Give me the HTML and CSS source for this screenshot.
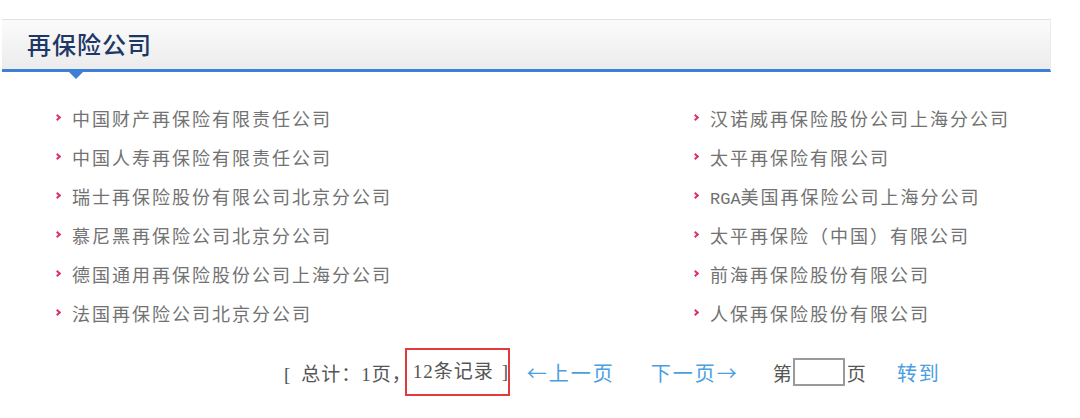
FILE: index.html
```html
<!DOCTYPE html>
<html lang="zh">
<head>
<meta charset="utf-8">
<title>再保险公司</title>
<link rel="stylesheet" href="styles.css">
</head>
<body>
<div class="panel">
  <div class="head">
    <h2 class="title">再保险公司</h2>
    <span class="pointer"></span>
  </div>
  <ul class="list">
    <li><a class="item">中国财产再保险有限责任公司</a></li>
    <li><a class="item">汉诺威再保险股份公司上海分公司</a></li>
    <li><a class="item">中国人寿再保险有限责任公司</a></li>
    <li><a class="item">太平再保险有限公司</a></li>
    <li><a class="item">瑞士再保险股份有限公司北京分公司</a></li>
    <li><a class="item"><span class="latin">RGA</span>美国再保险公司上海分公司</a></li>
    <li><a class="item">慕尼黑再保险公司北京分公司</a></li>
    <li><a class="item">太平再保险（中国）有限公司</a></li>
    <li><a class="item">德国通用再保险股份公司上海分公司</a></li>
    <li><a class="item">前海再保险股份有限公司</a></li>
    <li><a class="item">法国再保险公司北京分公司</a></li>
    <li><a class="item">人保再保险股份有限公司</a></li>
  </ul>
  <div class="pager">
    <span class="info"><span class="bracket">[</span>总计：1页，</span><span class="mark">12条记录<span class="close">]</span></span>
    <a class="link prev"><span class="arrow">←</span>上一页</a>
    <a class="link next">下一页<span class="arrow">→</span></a>
    <span class="goto"><span>第</span><span class="box"></span><span>页</span></span>
    <a class="link go">转到</a>
  </div>
</div>
</body>
</html>
```

FILE: styles.css
```css
html, body {
  margin: 0;
  padding: 0;
  background: #ffffff;
}
body {
  font-family: "Noto Sans CJK SC", sans-serif;
}
.panel {
  width: 1049px;
  margin: 19px 0 0 2px;
}
.head {
  position: relative;
  height: 49px;
  border-top: 1px solid #e2e2e2;
  border-right: 1px solid #ececec;
  border-bottom: 3px solid #3d7fd6;
  background: linear-gradient(#fbfbfb, #ececec);
  display: flex;
  align-items: center;
  padding-left: 25px;
}
.title {
  margin: 0;
  font-size: 24px;
  font-weight: 500;
  color: #1d3866;
  letter-spacing: 1px;
  margin-top: -3px;
}
.pointer {
  position: absolute;
  left: 67px;
  bottom: -10px;
  width: 0;
  height: 0;
  border-left: 7px solid transparent;
  border-right: 7px solid transparent;
  border-top: 7px solid #3d7fd6;
}
.list {
  list-style: none;
  margin: 0;
  padding: 26px 0 0 53px;
  display: grid;
  grid-template-columns: 638px 1fr;
}
.list li {
  height: 39px;
  display: flex;
  align-items: center;
}
.item {
  position: relative;
  padding-left: 17px;
  font-size: 18px;
  letter-spacing: 2px;
  color: #727272;
}
.item::before {
  content: "";
  position: absolute;
  left: 0;
  top: 50%;
  width: 3px;
  height: 3px;
  margin-top: -3px;
  border-top: 2px solid #e0306a;
  border-right: 2px solid #e0306a;
  transform: rotate(45deg);
}
.latin {
  font-family: "Liberation Mono", monospace;
  font-size: 17px;
  letter-spacing: 0;
}
.pager {
  display: flex;
  align-items: center;
  margin-top: 16px;
  padding-left: 282px;
  color: #555;
}
.info, .mark {
  font-family: "Liberation Serif", "Noto Sans CJK SC", serif;
  font-size: 19px;
  letter-spacing: 1px;
}
.bracket {
  margin-right: 10px;
}
.mark {
  display: inline-block;
  box-sizing: border-box;
  width: 105px;
  height: 48px;
  line-height: 44px;
  border: 2px solid #e23a3a;
  padding-left: 6px;
  margin-left: -7px;
  margin-right: 17px;
  white-space: nowrap;
}
.close {
  margin-left: 8px;
}
.link {
  color: #4b9ee0;
  font-size: 20px;
  letter-spacing: 2px;
}
.arrow {
  font-family: "Noto Sans CJK SC", sans-serif;
}
.prev {
  margin-right: 36px;
}
.next {
  margin-right: 34px;
}
.goto {
  display: flex;
  align-items: center;
  font-size: 19px;
  margin-right: 31px;
}
.box {
  display: inline-block;
  width: 48px;
  height: 24px;
  border: 2px solid #9a9a9a;
  margin: 0 2px 0 1px;
}
```
